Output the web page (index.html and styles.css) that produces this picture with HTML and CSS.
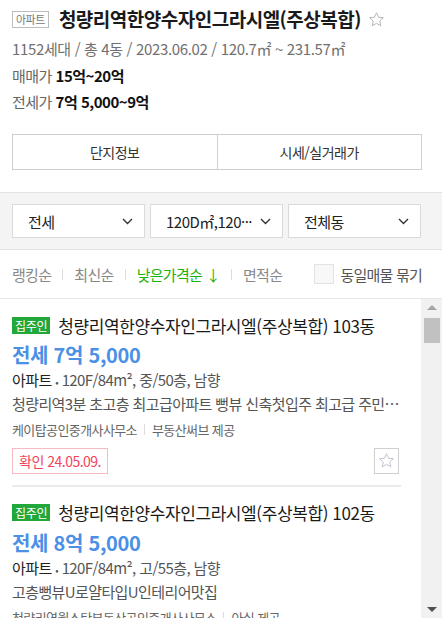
FILE: index.html
```html
<!DOCTYPE html>
<html lang="ko">
<head>
    <meta charset="UTF-8">
    <meta name="viewport" content="width=device-width, initial-scale=1.0">
    <link rel="stylesheet" href="styles.css">
</head>
<body>
    <div class="page">
        <section class="summary">
            <div class="title-row">
                <span class="type-tag">아파트</span>
                <h1 class="complex-name">청량리역한양수자인그라시엘(주상복합)</h1>
                <svg class="fav-star" width="17" height="17" viewBox="0 0 24 24"><path d="M12 2.5l2.9 6.3 6.8.7-5.1 4.6 1.5 6.8L12 17.4l-6.1 3.5 1.5-6.8-5.1-4.6 6.8-.7z" fill="none" stroke="#b5b5b5" stroke-width="1.4" stroke-linejoin="round"/></svg>
            </div>
            <p class="meta">1152세대 / 총 4동 / 2023.06.02 / 120.7㎡ ~ 231.57㎡</p>
            <p class="price-line first"><span class="price-label">매매가</span> <strong>15억~20억</strong></p>
            <p class="price-line"><span class="price-label">전세가</span> <strong>7억 5,000~9억</strong></p>
            <div class="tabs">
                <button class="tab">단지정보</button>
                <button class="tab">시세/실거래가</button>
            </div>
        </section>

        <section class="filters">
            <div class="select"><span>전세</span><svg class="chevron" width="11" height="7" viewBox="0 0 11 7"><path d="M1 1l4.5 4.5L10 1" fill="none" stroke="#333" stroke-width="1.4"/></svg></div>
            <div class="select select-mid"><span>120D㎡,120···</span><svg class="chevron" width="11" height="7" viewBox="0 0 11 7"><path d="M1 1l4.5 4.5L10 1" fill="none" stroke="#333" stroke-width="1.4"/></svg></div>
            <div class="select"><span>전체동</span><svg class="chevron" width="11" height="7" viewBox="0 0 11 7"><path d="M1 1l4.5 4.5L10 1" fill="none" stroke="#333" stroke-width="1.4"/></svg></div>
        </section>

        <div class="sort-bar">
            <div class="sort-list">
                <span class="sort-item">랭킹순</span>
                <span class="sort-sep"></span>
                <span class="sort-item">최신순</span>
                <span class="sort-sep"></span>
                <span class="sort-item active">낮은가격순 ↓</span>
                <span class="sort-sep"></span>
                <span class="sort-item">면적순</span>
            </div>
            <label class="group-check"><span class="checkbox"></span>동일매물 묶기</label>
        </div>

        <div class="list-wrap">
            <div class="list">
                <div class="item">
                    <div class="item-title"><span class="owner-tag">집주인</span><span class="item-name">청량리역한양수자인그라시엘(주상복합) 103동</span></div>
                    <div class="item-price">전세 7억 5,000</div>
                    <div class="item-spec"><span class="spec-type">아파트</span> <span class="dot">•</span> 120F/84m², 중/50층, 남향</div>
                    <div class="item-desc">청량리역3분 초고층 최고급아파트 뻥뷰 신축첫입주 최고급 주민공동시설</div>
                    <div class="item-agent">케이탑공인중개사사무소<span class="agent-sep"></span>부동산써브 제공</div>
                    <div class="item-foot">
                        <span class="confirm">확인 24.05.09.</span>
                        <span class="item-fav"><svg width="17" height="17" viewBox="0 0 24 24"><path d="M12 2.5l2.9 6.3 6.8.7-5.1 4.6 1.5 6.8L12 17.4l-6.1 3.5 1.5-6.8-5.1-4.6 6.8-.7z" fill="none" stroke="#b9c0cc" stroke-width="1.3" stroke-linejoin="round"/></svg></span>
                    </div>
                </div>
                <div class="item">
                    <div class="item-title"><span class="owner-tag">집주인</span><span class="item-name">청량리역한양수자인그라시엘(주상복합) 102동</span></div>
                    <div class="item-price">전세 8억 5,000</div>
                    <div class="item-spec"><span class="spec-type">아파트</span> <span class="dot">•</span> 120F/84m², 고/55층, 남향</div>
                    <div class="item-desc">고층뻥뷰U로얄타입U인테리어맛집</div>
                    <div class="item-agent">청량리역월스탄부동산공인중개사사무소<span class="agent-sep"></span>아실 제공</div>
                </div>
            </div>
            <div class="scrollbar">
                <span class="sb-arrow sb-up"></span>
                <span class="sb-thumb"></span>
                <span class="sb-track"></span>
                <span class="sb-arrow sb-down"></span>
            </div>
        </div>
    </div>
</body>
</html>
```

FILE: styles.css
```css
* {
    box-sizing: border-box;
}
body {
    margin: 0;
    font-family: "Noto Sans CJK KR", "Noto Sans", sans-serif;
    color: #222;
    background: #fff;
}
p, h1 {
    margin: 0;
}
.page {
    width: 442px;
    height: 618px;
    display: flex;
    flex-direction: column;
    overflow: hidden;
}

/* summary */
.summary {
    padding: 7px 20px 22px 12px;
}
.title-row {
    display: flex;
    align-items: center;
    height: 24px;
}
.type-tag {
    display: inline-block;
    border: 1px solid #bdbdbd;
    color: #777;
    font-size: 11px;
    line-height: 15px;
    padding: 0 3px;
    letter-spacing: -0.5px;
}
.complex-name {
    margin-left: 10px;
    font-size: 19px;
    font-weight: bold;
    line-height: 24px;
    letter-spacing: -0.5px;
    color: #1a1a1a;
}
.fav-star {
    margin-left: 7px;
}
.meta {
    margin-top: 8px;
    font-size: 15px;
    line-height: 20px;
    color: #707070;
    letter-spacing: -0.35px;
}
.price-line {
    font-size: 15px;
    line-height: 26px;
    letter-spacing: -0.5px;
}
.price-line.first {
    margin-top: 4px;
}
.price-label {
    color: #666;
}
.price-line strong {
    color: #111;
}
.tabs {
    display: flex;
    margin-top: 19px;
}
.tab {
    flex: 1;
    height: 36px;
    background: #fff;
    border: 1px solid #cfcfcf;
    font-family: inherit;
    font-size: 14px;
    color: #333;
    letter-spacing: -0.5px;
}
.tab + .tab {
    border-left: none;
}

/* filters */
.filters {
    display: flex;
    gap: 5px;
    padding: 11px 21px 11px 12px;
    background: #f4f4f4;
    border-top: 1px solid #e2e2e2;
    border-bottom: 1px solid #e2e2e2;
}
.select {
    flex: 1;
    height: 34px;
    background: #fff;
    border: 1px solid #dadada;
    display: flex;
    align-items: center;
    justify-content: space-between;
    padding: 0 11px 0 15px;
    font-size: 15px;
    color: #222;
    letter-spacing: -0.5px;
}

/* sort bar */
.sort-bar {
    height: 49px;
    display: flex;
    align-items: center;
    justify-content: space-between;
    padding: 0 20px 0 12px;
    border-bottom: 1px solid #e6e6e6;
}
.sort-list {
    display: flex;
    align-items: center;
    gap: 11px;
}
.sort-item {
    font-size: 15px;
    color: #888;
    letter-spacing: -0.7px;
}
.sort-item.active {
    color: #1db10b;
}
.sort-sep {
    width: 1px;
    height: 11px;
    background: #ddd;
}
.group-check {
    display: flex;
    align-items: center;
    gap: 7px;
    font-size: 15px;
    color: #555;
    letter-spacing: -0.8px;
}
.checkbox {
    width: 20px;
    height: 20px;
    border: 1px solid #e3e3e3;
    background: #f8f8f8;
}

/* list */
.list-wrap {
    flex: 1;
    display: flex;
    min-height: 0;
}
.list {
    flex: 1;
    overflow: hidden;
    padding: 0 20px 0 12px;
}
.item {
    padding: 16px 0 11px;
    border-bottom: 2px solid #ebebeb;
}
.item-title {
    display: flex;
    align-items: center;
    height: 20px;
}
.owner-tag {
    background: #22a83a;
    color: #fff;
    font-size: 12px;
    line-height: 17px;
    padding: 0 3px;
    letter-spacing: -0.3px;
}
.item-name {
    margin-left: 8px;
    font-size: 17px;
    letter-spacing: -0.4px;
    color: #1a1a1a;
}
.item-price {
    margin-top: 6px;
    font-size: 20px;
    line-height: 28px;
    font-weight: bold;
    color: #4a90e6;
    letter-spacing: -0.3px;
}
.item-spec {
    font-size: 15px;
    line-height: 22px;
    color: #555;
    letter-spacing: -0.6px;
}
.spec-type {
    color: #222;
}
.dot {
    font-size: 10px;
    vertical-align: middle;
}
.item-desc {
    font-size: 15px;
    line-height: 22px;
    color: #555;
    letter-spacing: -0.6px;
    white-space: nowrap;
    overflow: hidden;
    text-overflow: ellipsis;
}
.item-agent {
    margin-top: 5px;
    font-size: 13px;
    line-height: 20px;
    color: #666;
    letter-spacing: -0.6px;
    display: flex;
    align-items: center;
}
.agent-sep {
    width: 1px;
    height: 11px;
    background: #ddd;
    margin: 0 7px;
}
.item-foot {
    margin-top: 8px;
    display: flex;
    justify-content: space-between;
    align-items: center;
}
.confirm {
    border: 1px solid #f7b9c2;
    color: #f2425a;
    font-size: 14px;
    line-height: 24px;
    padding: 0 6px;
    letter-spacing: -0.5px;
}
.item-fav {
    width: 25px;
    height: 26px;
    border: 1px solid #cfcfcf;
    display: flex;
    align-items: center;
    justify-content: center;
    margin-right: 2px;
}

/* scrollbar */
.scrollbar {
    width: 21px;
    background: #f1f1f1;
    display: flex;
    flex-direction: column;
    align-items: center;
}
.sb-arrow {
    width: 0;
    height: 0;
    border-left: 5px solid transparent;
    border-right: 5px solid transparent;
}
.sb-up {
    margin-top: 6px;
    border-bottom: 5px solid #a3a3a3;
}
.sb-down {
    margin-bottom: 6px;
    border-top: 5px solid #505050;
}
.sb-thumb {
    margin-top: 8px;
    width: 16px;
    height: 25px;
    background: #c1c1c1;
}
.sb-track {
    flex: 1;
}
```
